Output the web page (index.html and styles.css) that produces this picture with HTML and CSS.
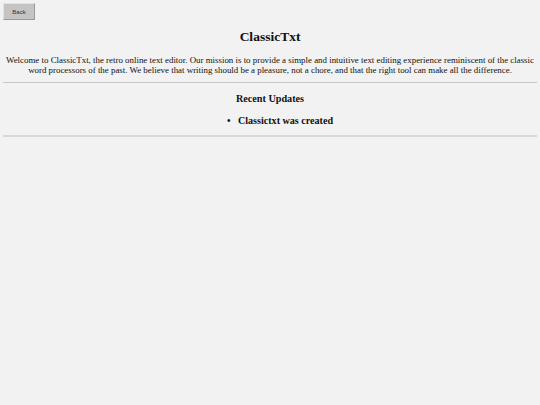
FILE: index.html
```html
<!DOCTYPE html>
<html lang="en">
<head>
<meta charset="utf-8">
<title>ClassicTxt</title>
<link rel="stylesheet" href="styles.css">
</head>
<body>
<div class="page">
  <div class="toolbar"><button class="back-btn">Back</button></div>
  <h1 class="title">ClassicTxt</h1>
  <p class="intro">Welcome to ClassicTxt, the retro online text editor. Our mission is to provide a simple and intuitive text editing experience reminiscent of the classic word processors of the past. We believe that writing should be a pleasure, not a chore, and that the right tool can make all the difference.</p>
  <hr class="divider">
  <section class="updates">
    <h2 class="updates-title">Recent Updates</h2>
    <ul class="updates-list">
      <li class="update-item">Classictxt was created</li>
    </ul>
  </section>
</div>
</body>
</html>
```
FILE: styles.css
```css
html, body {
  margin: 0;
  padding: 0;
  background: #f2f2f2;
}
.page {
  padding: 3px;
  font-family: "Liberation Serif", "Times New Roman", serif;
  color: #111;
}
.toolbar {
  display: flex;
}
.back-btn {
  width: 32px;
  height: 17px;
  padding: 0;
  margin: 0;
  font-family: "Liberation Sans", Arial, sans-serif;
  font-size: 6px;
  color: #333;
  background: #c4c4c4;
  border: 1px solid;
  border-color: #e2e2e2 #9a9a9a #9a9a9a #e2e2e2;
}
.title {
  margin: 9px 0 0;
  font-size: 13.5px;
  line-height: 15.5px;
  text-align: center;
  font-weight: bold;
}
.intro {
  margin: 10px 0 0;
  font-size: 8.9px;
  line-height: 10.7px;
  text-align: center;
}
.divider {
  margin: 6px 0 0;
  border: 0;
  border-top: 1px solid #c6c6c6;
  height: 0;
}
.updates {
  padding: 10px 0 9px;
  border-bottom: 2px solid #d8d8d8;
}
.updates-title {
  margin: 0;
  font-size: 10.2px;
  line-height: 11.7px;
  text-align: center;
  font-weight: bold;
}
.updates-list {
  margin: 10px 0 0;
  padding-left: 20px;
  list-style: none;
  text-align: center;
  font-size: 10.1px;
  line-height: 11.6px;
  font-weight: bold;
}
.update-item::before {
  content: "\2022";
  display: inline-block;
  width: 11px;
  text-align: left;
}
```
